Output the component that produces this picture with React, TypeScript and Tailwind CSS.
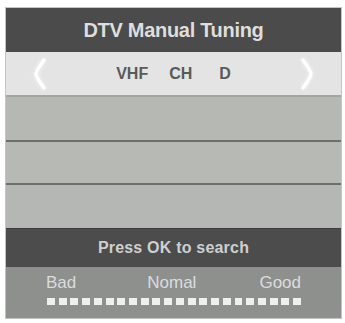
import React from 'react';

const Chevron: React.FC<{ dir: 'left' | 'right' }> = ({ dir }) => (
  <svg width="14" height="32" viewBox="0 0 14 32" className="drop-shadow-[0_0_2px_rgba(255,255,255,0.8)]">
    <path
      d={dir === 'left' ? 'M11 2 Q3 13 3 16 Q3 19 11 30' : 'M3 2 Q11 13 11 16 Q11 19 3 30'}
      fill="none"
      stroke="#ffffff"
      strokeWidth="3.2"
      strokeLinecap="round"
    />
  </svg>
);

const App: React.FC = () => {
  const squares = Array.from({ length: 22 });

  return (
    <div className="w-[345px] h-[323px] bg-white pt-[7px] pl-[5px]" style={{ fontFamily: '"Liberation Sans", Arial, sans-serif' }}>
      <div className="w-[337px] border border-[#c4c4c4] flex flex-col">
        {/* title */}
        <div className="h-[44px] bg-[#4a4b4a] flex items-center justify-center">
          <span className="text-[20px] font-bold text-[#dedede] tracking-[-0.3px]">DTV Manual Tuning</span>
        </div>

        {/* channel selector */}
        <div className="h-[45px] bg-[#e3e4e3] flex items-center justify-between px-[27px] border-b-2 border-[#a3a5a2]">
          <Chevron dir="left" />
          <div className="flex items-center text-[16px] font-bold text-[#5a5a5a]">
            <span>VHF</span>
            <span className="ml-[21px]">CH</span>
            <span className="ml-[27px]">D</span>
          </div>
          <Chevron dir="right" />
        </div>

        {/* rows */}
        <div className="h-[45px] bg-[#b6b8b4] border-b-2 border-[#6d6f6c]" />
        <div className="h-[43px] bg-[#b6b9b4] border-b-2 border-[#6d6f6c]" />
        <div className="h-[43px] bg-[#b4b7b3]" />

        {/* footer */}
        <div className="h-[39px] bg-[#4b4c4b] flex items-center justify-center border-t border-[#3c3d3c]">
          <span className="text-[16px] font-bold text-[#cfcfcf] tracking-[0.2px]">Press OK to search</span>
        </div>
        <div className="h-[51px] bg-[#8e908e] px-[40px] pt-[6px]">
          <div className="flex justify-between text-[17px] text-[#dcdcdc] leading-[20px]">
            <span>Bad</span>
            <span className="pl-[8px]">Nomal</span>
            <span>Good</span>
          </div>
          <div className="flex gap-[3.75px] mt-[5px] pl-[1px]">
            {squares.map((_, i) => (
              <div key={i} className="w-[8px] h-[7px] bg-[#efefef]" />
            ))}
          </div>
        </div>
      </div>
    </div>
  );
};

export default App;
